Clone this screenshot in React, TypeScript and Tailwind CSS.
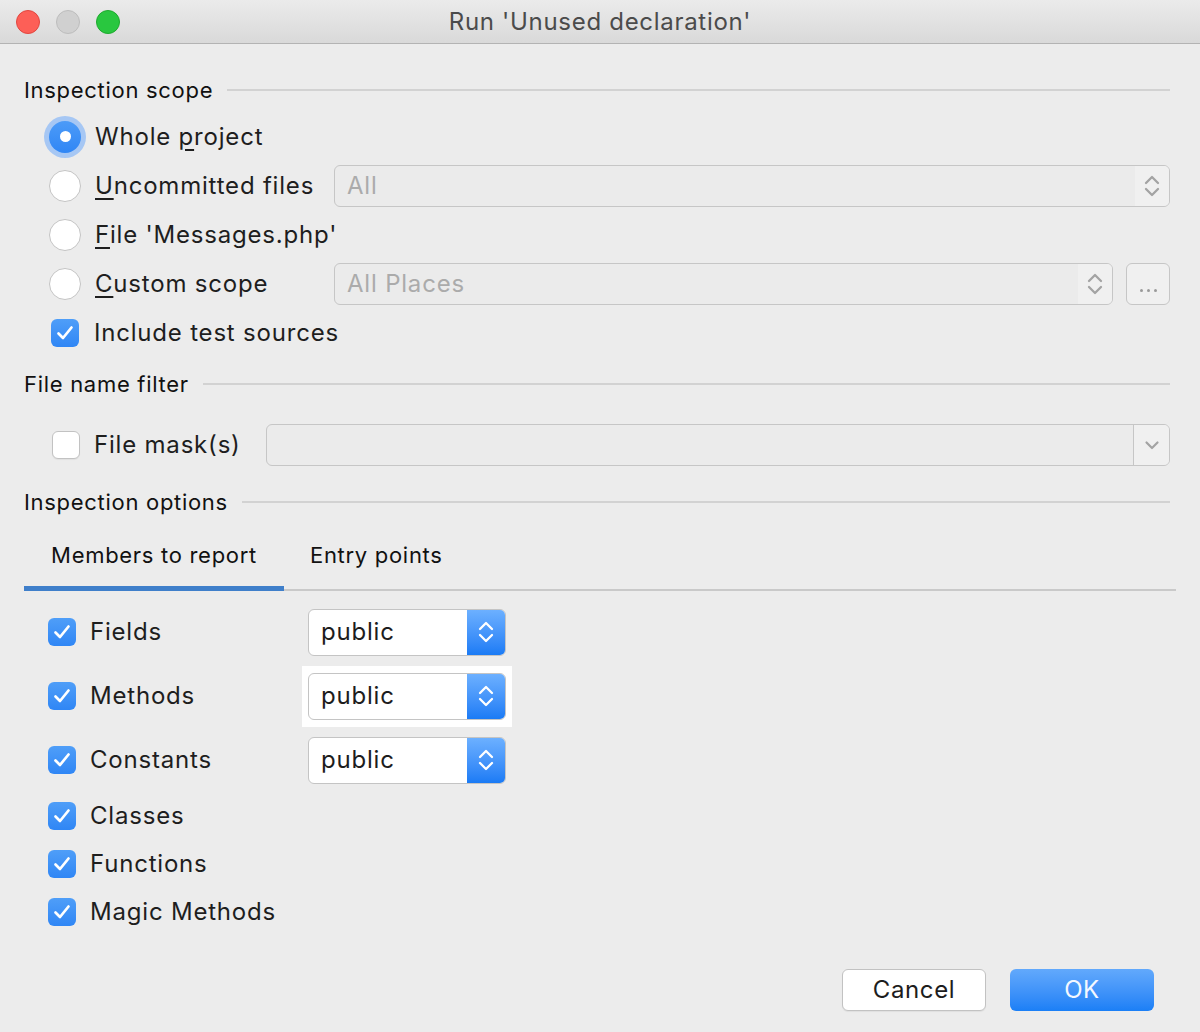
import React from "react";

const Chevrons = ({ color }: { color: string }) => (
  <svg width="18" height="28" viewBox="0 0 18 28" fill="none">
    <path d="M3 11 L9 5 L15 11" stroke={color} strokeWidth="2.3" strokeLinecap="round" strokeLinejoin="round" />
    <path d="M3 17 L9 23 L15 17" stroke={color} strokeWidth="2.3" strokeLinecap="round" strokeLinejoin="round" />
  </svg>
);

const Check = () => (
  <svg width="20" height="18" viewBox="0 0 20 18" fill="none">
    <path d="M3.5 9.5 L8 14 L16.5 3.5" stroke="white" strokeWidth="2.7" strokeLinecap="round" strokeLinejoin="round" />
  </svg>
);

const CheckBox = ({ checked }: { checked: boolean }) =>
  checked ? (
    <div className="w-[28px] h-[28px] rounded-[6px] bg-gradient-to-b from-[#4f9ef8] to-[#2f86f5] flex items-center justify-center">
      <Check />
    </div>
  ) : (
    <div className="w-[28px] h-[28px] rounded-[6px] bg-white border border-[#c2c2c2] shadow-[0_1px_1px_rgba(0,0,0,0.05)]" />
  );

const Radio = ({ selected }: { selected: boolean }) =>
  selected ? (
    <div className="w-[42px] h-[42px] -m-[5px] rounded-full bg-[#a6c7f4] flex items-center justify-center">
      <div className="w-[32px] h-[32px] rounded-full bg-gradient-to-b from-[#4c9bf8] to-[#2f86f5] flex items-center justify-center">
        <div className="w-[11px] h-[11px] rounded-full bg-white" />
      </div>
    </div>
  ) : (
    <div className="w-[32px] h-[32px] rounded-full bg-white border border-[#c4c4c4]" />
  );

const Heading = ({ text, className = "" }: { text: string; className?: string }) => (
  <div className={"h-[28px] flex items-center pr-[30px] " + className}>
    <span className="text-[22px] tracking-[0.7px] text-[#111] whitespace-nowrap">{text}</span>
    <div className="flex-1 h-[2px] bg-[#d2d2d2] ml-[14px]" />
  </div>
);

const U = ({ c }: { c: string }) => <span className="underline underline-offset-[4px] decoration-[2px]">{c}</span>;

const DisabledCombo = ({ text, className = "" }: { text: string; className?: string }) => (
  <div className={"h-[42px] rounded-[6px] border border-[#c6c6c6] bg-[#ebebeb] flex items-stretch overflow-hidden " + className}>
    <div className="flex-1 flex items-center pl-[12px] text-[24px] tracking-[0.8px] text-[#ababab]">{text}</div>
    <div className="w-[34px] bg-[#f0f0f0] flex items-center justify-center">
      <Chevrons color="#a3a3a3" />
    </div>
  </div>
);

const BlueSelect = () => (
  <div className="w-[198px] h-[47px] rounded-[6px] border border-[#c4c4c4] bg-white flex items-stretch overflow-hidden">
    <div className="flex-1 flex items-center pl-[12px] text-[24px] tracking-[0.8px] text-[#1d1d1d]">public</div>
    <div className="w-[38px] bg-gradient-to-b from-[#6cb0ff] to-[#1a7bf5] flex items-center justify-center">
      <Chevrons color="white" />
    </div>
  </div>
);

const label = "text-[24px] tracking-[0.8px]";

export default function App() {
  return (
    <div
      className="w-[1200px] h-[1032px] bg-[#ececec] flex flex-col text-[#1e1e1e]"
      style={{ fontFamily: "Inter, 'Noto Sans', sans-serif" }}
    >
      {/* Title bar */}
      <div className="h-[44px] shrink-0 bg-gradient-to-b from-[#ebebeb] to-[#d9d9d9] border-b border-[#b3b3b3] flex items-center relative">
        <div className="flex items-center gap-[16px] pl-[16px]">
          <div className="w-[24px] h-[24px] rounded-full bg-[#fd5f57] border border-[#e2463f]" />
          <div className="w-[24px] h-[24px] rounded-full bg-[#d0d0d0] border border-[#bdbdbd]" />
          <div className="w-[24px] h-[24px] rounded-full bg-[#29c73f] border border-[#1eaa2e]" />
        </div>
        <div className="absolute inset-0 flex items-center justify-center text-[24px] tracking-[0.7px] text-[#4b4b4b]">
          Run 'Unused declaration'
        </div>
      </div>

      <div className="pl-[24px] flex flex-col">
        <Heading text="Inspection scope" className="mt-[32px]" />

        <div className="mt-[8px] pl-[25px] flex flex-col">
          <div className="h-[49px] flex items-center">
            <div className="w-[32px] flex justify-center"><Radio selected /></div>
            <span className={"ml-[14px] " + label}>Whole <U c="p" />roject</span>
          </div>
          <div className="h-[49px] flex items-center">
            <div className="w-[32px] flex justify-center"><Radio selected={false} /></div>
            <span className={"ml-[14px] w-[239px] " + label}><U c="U" />ncommitted files</span>
            <DisabledCombo text="All" className="w-[836px]" />
          </div>
          <div className="h-[49px] flex items-center">
            <div className="w-[32px] flex justify-center"><Radio selected={false} /></div>
            <span className={"ml-[14px] " + label}><U c="F" />ile 'Messages.php'</span>
          </div>
          <div className="h-[49px] flex items-center">
            <div className="w-[32px] flex justify-center"><Radio selected={false} /></div>
            <span className={"ml-[14px] w-[239px] " + label}><U c="C" />ustom scope</span>
            <DisabledCombo text="All Places" className="w-[779px]" />
            <div className="ml-[13px] w-[44px] h-[42px] rounded-[6px] border border-[#c6c6c6] bg-[#f0f0f0] flex items-end justify-center pb-[12px] gap-[4px]">
              <div className="w-[3px] h-[3px] rounded-full bg-[#9a9a9a]" />
              <div className="w-[3px] h-[3px] rounded-full bg-[#9a9a9a]" />
              <div className="w-[3px] h-[3px] rounded-full bg-[#9a9a9a]" />
            </div>
          </div>
          <div className="h-[50px] flex items-center">
            <div className="w-[32px] flex justify-center"><CheckBox checked /></div>
            <span className={"ml-[13px] " + label}>Include test sources</span>
          </div>
        </div>

        <Heading text="File name filter" className="mt-[12px]" />

        <div className="mt-[26px] h-[42px] pl-[28px] flex items-center">
          <CheckBox checked={false} />
          <span className={"ml-[14px] w-[172px] " + label}>File mask(s)</span>
          <div className="w-[904px] h-[42px] rounded-[6px] border border-[#c6c6c6] bg-[#ebebeb] flex items-stretch overflow-hidden">
            <div className="flex-1" />
            <div className="w-[36px] bg-[#f0f0f0] border-l border-[#c6c6c6] flex items-center justify-center">
              <svg width="16" height="10" viewBox="0 0 16 10" fill="none">
                <path d="M2.5 2.5 L8 8 L13.5 2.5" stroke="#a3a3a3" strokeWidth="2.2" strokeLinecap="round" strokeLinejoin="round" />
              </svg>
            </div>
          </div>
        </div>

        <Heading text="Inspection options" className="mt-[22px]" />

        {/* Tabs */}
        <div className="mt-[9px] pr-[24px] flex flex-col">
          <div className="h-[61px] flex items-center">
            <div className="w-[260px] text-center text-[22px] tracking-[0.7px] text-[#111]">Members to report</div>
            <div className="pl-[26px] text-[22px] tracking-[0.7px] text-[#111]">Entry points</div>
          </div>
          <div className="h-[5px] flex items-end">
            <div className="w-[260px] h-[5px] bg-[#3f7fca]" />
            <div className="flex-1 h-[2px] bg-[#c9c9c9]" />
          </div>
        </div>

        {/* Member rows */}
        <div className="mt-[9px] pl-[24px] flex flex-col">
          {["Fields", "Methods", "Constants"].map((t) => (
            <div key={t} className="h-[64px] flex items-center">
              <CheckBox checked />
              <span className={"ml-[14px] w-[218px] " + label}>{t}</span>
              <div className={t === "Methods" ? "bg-white p-[6px] -m-[6px] py-[7px] -my-[7px]" : ""}>
                <BlueSelect />
              </div>
            </div>
          ))}
          {["Classes", "Functions", "Magic Methods"].map((t) => (
            <div key={t} className="h-[48px] flex items-center">
              <CheckBox checked />
              <span className={"ml-[14px] " + label}>{t}</span>
            </div>
          ))}
        </div>

        {/* Buttons */}
        <div className="mt-[33px] pr-[46px] flex justify-end gap-[24px]">
          <div className="w-[144px] h-[42px] rounded-[6px] bg-white border border-[#c2c2c2] shadow-[0_1px_1px_rgba(0,0,0,0.06)] flex items-center justify-center text-[24px] tracking-[0.6px] text-[#1d1d1d]">
            Cancel
          </div>
          <div className="w-[144px] h-[42px] rounded-[6px] bg-gradient-to-b from-[#62a9fc] to-[#1a7ff6] flex items-center justify-center text-[24px] tracking-[0.6px] text-[#f4f8ff]">
            OK
          </div>
        </div>
      </div>
    </div>
  );
}
